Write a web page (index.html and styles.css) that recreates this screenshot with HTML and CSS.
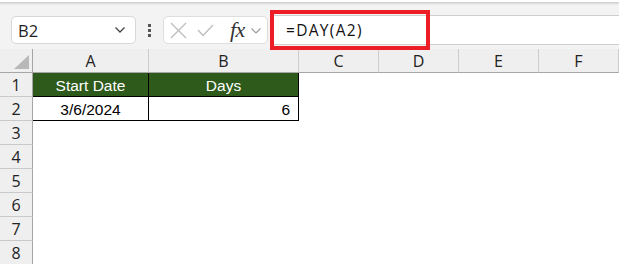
FILE: index.html
```html
<!DOCTYPE html>
<html>
<head>
<meta charset="utf-8">
<link rel="stylesheet" href="styles.css">
</head>
<body>
<div class="ribbon-edge"></div>
<div class="fbar">
  <div class="namebox">
    <span class="nb-text">B2</span>
    <svg class="chev" width="10" height="6" viewBox="0 0 10 6"><path d="M0.5 0.5 L5 5 L9.5 0.5" fill="none" stroke="#444" stroke-width="1.3"/></svg>
  </div>
  <div class="dots"><i></i><i></i><i></i></div>
  <div class="fnbox">
    <svg class="ic" width="17" height="17" viewBox="0 0 17 17"><path d="M1 1 L16 16 M16 1 L1 16" stroke="#bdbdbd" stroke-width="1.3" fill="none"/></svg>
    <svg class="ic" width="17" height="13" viewBox="0 0 17 13"><path d="M1 6 L6 11.5 L16 1" stroke="#bdbdbd" stroke-width="1.3" fill="none"/></svg>
    <span class="fx">fx</span>
    <svg class="chev2" width="10" height="6" viewBox="0 0 10 6"><path d="M0.5 0.5 L5 5 L9.5 0.5" fill="none" stroke="#9a9a9a" stroke-width="1.2"/></svg>
  </div>
  <div class="finput">
    <span class="ftext">=DAY(A2)</span>
    <div class="highlight"></div>
  </div>
</div>
<div class="grid">
  <div class="corner"><span class="tri"></span></div>
  <div class="ch">A</div><div class="ch">B</div><div class="ch">C</div><div class="ch">D</div><div class="ch">E</div><div class="ch">F</div>

  <div class="rh">1</div>
  <div class="cell head bl">Start Date</div>
  <div class="cell head br">Days</div>
  <div class="cell"></div><div class="cell"></div><div class="cell"></div><div class="cell"></div>

  <div class="rh">2</div>
  <div class="cell data bl center">3/6/2024</div>
  <div class="cell data br right">6</div>
  <div class="cell"></div><div class="cell"></div><div class="cell"></div><div class="cell"></div>

  <div class="rh">3</div><div class="cell"></div><div class="cell"></div><div class="cell"></div><div class="cell"></div><div class="cell"></div><div class="cell"></div>
  <div class="rh">4</div><div class="cell"></div><div class="cell"></div><div class="cell"></div><div class="cell"></div><div class="cell"></div><div class="cell"></div>
  <div class="rh">5</div><div class="cell"></div><div class="cell"></div><div class="cell"></div><div class="cell"></div><div class="cell"></div><div class="cell"></div>
  <div class="rh">6</div><div class="cell"></div><div class="cell"></div><div class="cell"></div><div class="cell"></div><div class="cell"></div><div class="cell"></div>
  <div class="rh">7</div><div class="cell"></div><div class="cell"></div><div class="cell"></div><div class="cell"></div><div class="cell"></div><div class="cell"></div>
  <div class="rh">8</div><div class="cell"></div><div class="cell"></div><div class="cell"></div><div class="cell"></div><div class="cell"></div><div class="cell"></div>
</div>
</body>
</html>
```

FILE: styles.css
```css
html, body {
  margin: 0;
  padding: 0;
  background: #f3f3f3;
  overflow: hidden;
  width: 619px;
  height: 264px;
  font-family: "Open Sans", "Noto Sans", "Liberation Sans", sans-serif;
}
.ribbon-edge {
  height: 2px;
  background: #ffffff;
  border-bottom: 1px solid #d2d2d2;
  box-shadow: 0 1px 2px rgba(0,0,0,0.12);
}
.fbar {
  height: 46px;
  display: flex;
  align-items: center;
  box-sizing: border-box;
}
.namebox {
  margin-left: 11px;
  width: 125px;
  height: 28px;
  box-sizing: border-box;
  background: #fff;
  border: 1px solid #d8d8d8;
  border-radius: 5px;
  display: flex;
  align-items: center;
  justify-content: space-between;
  padding: 0 10px 0 6px;
  margin-top: 8px;
}
.nb-text {
  font-size: 16.5px;
  color: #1f1f1f;
  font-family: "Open Sans", "Liberation Sans", sans-serif;
}
.dots {
  margin-left: 12px;
  width: 3px;
  display: flex;
  flex-direction: column;
  gap: 2px;
  margin-top: 8px;
}
.dots i {
  display: block;
  width: 3px;
  height: 3px;
  background: #555;
}
.fnbox {
  margin-left: 12px;
  width: 105px;
  height: 28px;
  box-sizing: border-box;
  background: #fff;
  border: 1px solid #dedede;
  border-radius: 5px;
  display: flex;
  align-items: center;
  padding-left: 6px;
  margin-top: 8px;
}
.fnbox .ic { margin-right: 10px; }
.fx {
  font-family: "Liberation Serif", "DejaVu Serif", serif;
  font-style: italic;
  font-size: 22px;
  color: #333;
  margin-left: 6px;
  letter-spacing: -0.5px;
  line-height: 1;
}
.chev2 { margin-left: 6px; margin-top: 1px; }
.finput {
  position: relative;
  flex: 1;
  margin-left: 3px;
  height: 30px;
  margin-top: 8px;
  box-sizing: border-box;
  background: #fff;
  border-top: 1px solid #cfcfcf;
  border-bottom: 1px solid #cfcfcf;
  display: flex;
  align-items: center;
  padding-left: 15px;
}
.ftext {
  font-family: "Open Sans", "Liberation Sans", sans-serif;
  font-size: 15.5px;
  color: #111;
  letter-spacing: 1.3px;
}
.highlight {
  position: absolute;
  left: -1px;
  top: -6px;
  width: 160px;
  height: 40px;
  box-sizing: border-box;
  border: 4px solid #ee1c25;
}
.grid {
  display: grid;
  grid-template-columns: 33px 116px 150px 80px 80px 80px 80px;
  grid-template-rows: 24px repeat(8, 24px);
  margin-top: 0;
}
.corner {
  background: #efefef;
  border-right: 1px solid #a6a6a6;
  border-bottom: 1px solid #a6a6a6;
  box-sizing: border-box;
  position: relative;
}
.tri {
  position: absolute;
  right: 3px;
  bottom: 3px;
  width: 0;
  height: 0;
  border-left: 15px solid transparent;
  border-bottom: 14px solid #b8b8b8;
}
.ch {
  background: #efefef;
  border-right: 1px solid #cdcdcd;
  border-bottom: 1px solid #a6a6a6;
  box-sizing: border-box;
  font-size: 16px;
  color: #222;
  display: flex;
  align-items: center;
  justify-content: center;
  padding-top: 1px;
}
.rh {
  background: #efefef;
  border-right: 1px solid #a6a6a6;
  border-bottom: 1px solid #c9c9c9;
  box-sizing: border-box;
  font-size: 16px;
  color: #222;
  display: flex;
  align-items: center;
  justify-content: center;
  padding-top: 1px;
}
.cell {
  background: #fff;
  box-sizing: border-box;
  font-family: "Liberation Sans", Arial, sans-serif;
  font-size: 15.5px;
  display: flex;
  align-items: center;
  padding-top: 2px;
}
.head {
  background: #2e5a1c;
  color: #fff;
  justify-content: center;
  border-bottom: 1px solid #000;
}
.data {
  color: #000;
  border-bottom: 1px solid #000;
}
.bl { border-right: 1px solid #000; }
.br { border-right: 1px solid #000; }
.center { justify-content: center; }
.right { justify-content: flex-end; padding-right: 8px; }
```
